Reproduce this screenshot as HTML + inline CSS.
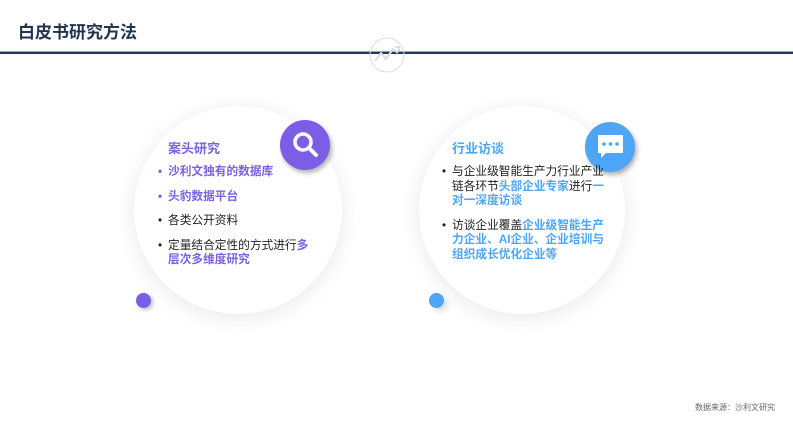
<!DOCTYPE html>
<html><head><meta charset="utf-8"><style>
body{margin:0;width:793px;height:446px;background:#fff;position:relative;overflow:hidden;font-family:"Liberation Sans","Noto Sans CJK SC",sans-serif}
.a{position:absolute}
.title{left:18px;top:18px;font-size:17px;font-weight:bold;color:#1f3550}
.line{left:0;top:51px;width:793px;height:2px;background:#243b55;border-top:1px solid #9aa6b2}
.circ{border-radius:50%;background:#fff;box-shadow:0 4px 22px rgba(0,0,0,0.09)}
.ic{border-radius:50%;box-shadow:2px 3px 5px rgba(0,0,0,0.3)}
.h{font-size:13px;font-weight:bold}
ul{margin:0;padding:0;list-style:none;font-size:11.7px;line-height:14.5px;color:#222}
li{position:relative;padding-left:10px;margin-bottom:10px}
li:before{content:"•";position:absolute;left:0;top:0;color:#222}
.p{color:#7b62e0;font-weight:bold}.b{color:#4da6f5;font-weight:bold}
.pl:before{color:#7b62e0!important}
</style></head><body>
<div class="a title">白皮书研究方法</div>
<div class="a line"></div>
<svg class="a" style="left:369px;top:37px" width="36" height="36" viewBox="0 0 36 36"><circle cx="18" cy="18" r="17" fill="none" stroke="#ddd" stroke-width="1"/><path d="M6 24l6-8 5 6 7-10 5 4M26 10h4v4" fill="none" stroke="#ddd" stroke-width="2"/></svg>
<div class="a circ" style="left:134px;top:106px;width:208px;height:208px"></div>
<div class="a circ" style="left:419px;top:106px;width:206px;height:208px"></div>
<div class="a ic" style="left:280px;top:120px;width:50px;height:50px;background:#7b5ee6"></div>
<svg class="a" style="left:280px;top:120px" width="50" height="50"><circle cx="23" cy="22" r="8" fill="none" stroke="#fff" stroke-width="3.5"/><path d="M29 28l7 7" stroke="#fff" stroke-width="4" stroke-linecap="round"/></svg>
<div class="a ic" style="left:585px;top:122px;width:50px;height:50px;background:#4da6f5"></div>
<svg class="a" style="left:585px;top:122px" width="50" height="50"><path d="M13 13h25v18H21l-5 5v-5h-3z" fill="#fff"/><circle cx="19" cy="22" r="1.8" fill="#4da6f5"/><circle cx="25.5" cy="22" r="1.8" fill="#4da6f5"/><circle cx="32" cy="22" r="1.8" fill="#4da6f5"/></svg>
<div class="a" style="left:136px;top:293px;width:15px;height:15px;border-radius:50%;background:#7b5ee6;box-shadow:2px 2px 4px rgba(0,0,0,.25)"></div>
<div class="a" style="left:429px;top:293px;width:15px;height:15px;border-radius:50%;background:#4da6f5;box-shadow:3px 3px 6px rgba(0,0,0,.15)"></div>
<div class="a h" style="left:168px;top:138px;color:#7b62e0">案头研究</div>
<ul class="a" style="left:158px;top:165px;width:156px">
<li class="pl p">沙利文独有的数据库</li>
<li class="pl p">头豹数据平台</li>
<li>各类公开资料</li>
<li>定量结合定性的方式进行<span class="p">多层次多维度研究</span></li>
</ul>
<div class="a h" style="left:452px;top:138px;color:#4da6f5">行业访谈</div>
<ul class="a" style="left:442px;top:165px;width:166px">
<li>与企业级智能生产力行业产业链各环节<span class="b">头部企业专家</span>进行<span class="b">一对一深度访谈</span></li>
<li>访谈企业覆盖<span class="b">企业级智能生产力企业、AI企业、企业培训与组织成长优化企业等</span></li>
</ul>
<div class="a" style="right:18px;top:402px;font-size:8px;color:#666">数据来源：沙利文研究</div>
</body></html>
